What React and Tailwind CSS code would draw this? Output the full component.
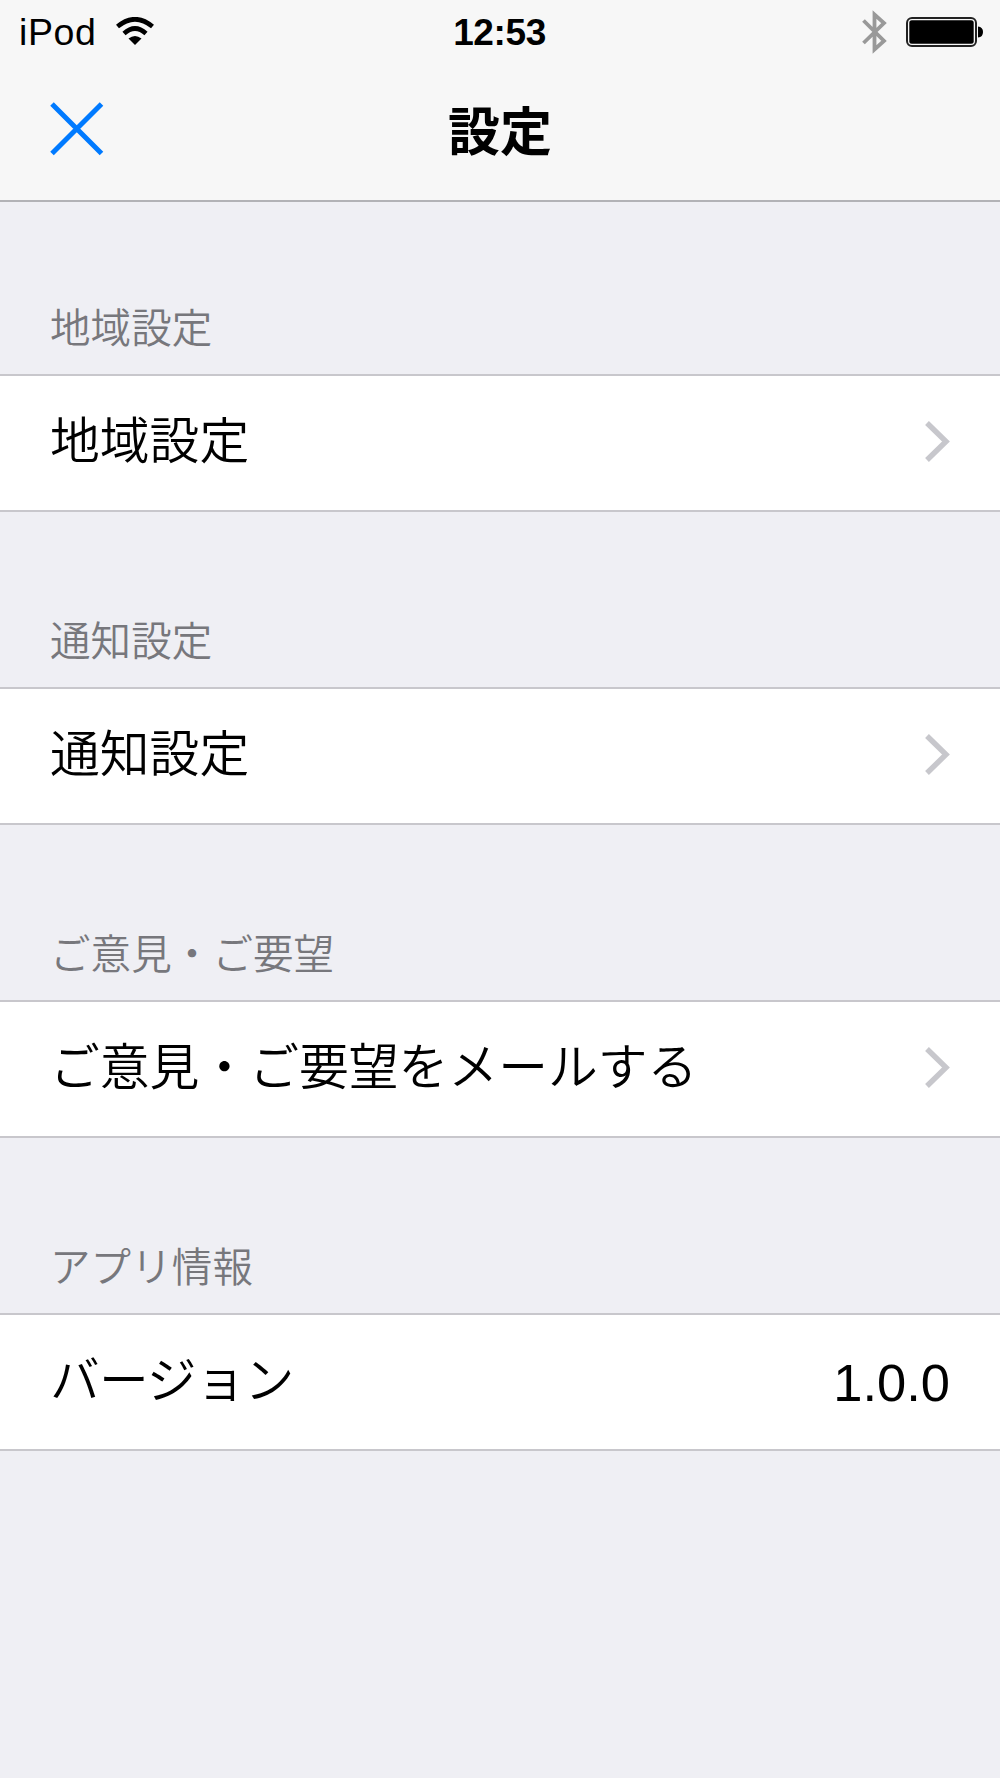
function Chevron() {
  return (
    <svg className="mb-[3px] block h-[41px] w-[25px]" viewBox="0 0 25 41" fill="none" stroke="#c7c7cc" strokeWidth="5.4">
      <path d="M2 2 L21 20.5 L2 39" />
    </svg>
  );
}

function Section({ title, label, value, headingClass = "h-[175px] pt-[106px]", labelClass = "" }) {
  return (
    <section>
      <h2 className={`${headingClass} pl-[50px] text-[40.5px] font-[350] leading-[48px] tracking-[0.1px] text-[#77777c]`}>
        {title}
      </h2>
      <div className="flex h-[138px] items-center justify-between border-y-2 border-[#c8c7cc] bg-white pl-[50px] pr-[50px] text-[49.8px] leading-[60px] text-black">
        <span className={`mb-[3px] font-[350] ${labelClass}`}>{label}</span>
        {value ? <span className="pt-[1px] text-[52.5px]">{value}</span> : <Chevron />}
      </div>
    </section>
  );
}

export default function App() {
  return (
    <main className="h-[1778px] w-[1000px] overflow-hidden bg-[#efeff4] font-['Liberation_Sans','Noto_Sans_CJK_JP',sans-serif]">
      <header className="h-[202px] border-b-2 border-[#b2b2b6] bg-[#f7f7f7]">
        <div className="grid h-[64px] grid-cols-3 items-center pl-[18px] pr-[17px]">
          <div className="flex items-center text-[37.5px]">
            <span className="w-[98px] pl-px pt-px tracking-[0.6px]">iPod</span>
            <svg className="mb-[2px] h-[28px] w-[38px]" viewBox="0 0 38 28">
              <path d="M1.5 9.5 Q19 -5 36.5 9.5 M8 16.5 Q19 6.5 30 16.5" fill="none" stroke="black" strokeWidth="4.6" />
              <path d="M12.5 21.5 Q19 16.5 25.5 21.5 L19 28Z" />
            </svg>
          </div>
          <span className="pt-[2px] text-center text-[37px] font-bold tracking-[-0.4px] -ml-[2px]">12:53</span>
          <div className="flex items-center justify-end gap-[19px]">
            <svg className="h-[44px] w-[25px]" viewBox="0 0 25 44" fill="none" stroke="#999" strokeWidth="3.8">
              <path d="M1.5 10.5 L22 31 L12.5 39.5 V4.5 L22 13 L1.5 33" />
            </svg>
            <svg className="h-[30px] w-[77px]" viewBox="0 0 77 30">
              <rect x="1" y="1" width="69" height="28" rx="5" fill="none" stroke="#222" strokeWidth="2" />
              <rect x="3.3" y="3.3" width="64.4" height="23.4" rx="2.5" />
              <path d="M72 9.5 Q77 10 77 15 Q77 20 72 20.5Z" />
            </svg>
          </div>
        </div>
        <div className="grid h-[136px] grid-cols-3 items-center pl-[50px] pr-[50px]">
          <svg className="mb-[7px] h-[54px] w-[54px]" viewBox="0 0 54 54" fill="none" stroke="#007aff" strokeWidth="5">
            <path d="M2 2 L51.5 51.5 M51.5 2 L2 51.5" />
          </svg>
          <h1 className="pt-px text-center text-[52px] font-bold leading-[60px]">設定</h1>
        </div>
      </header>
      <Section headingClass="h-[172px] pt-[103px]" title="地域設定" label="地域設定" />
      <Section title="通知設定" label="通知設定" />
      <Section title="ご意見・ご要望" label="ご意見・ご要望をメールする" />
      <Section title="アプリ情報" label="バージョン" value="1.0.0" labelClass="tracking-[-0.9px]" />
    </main>
  );
}
